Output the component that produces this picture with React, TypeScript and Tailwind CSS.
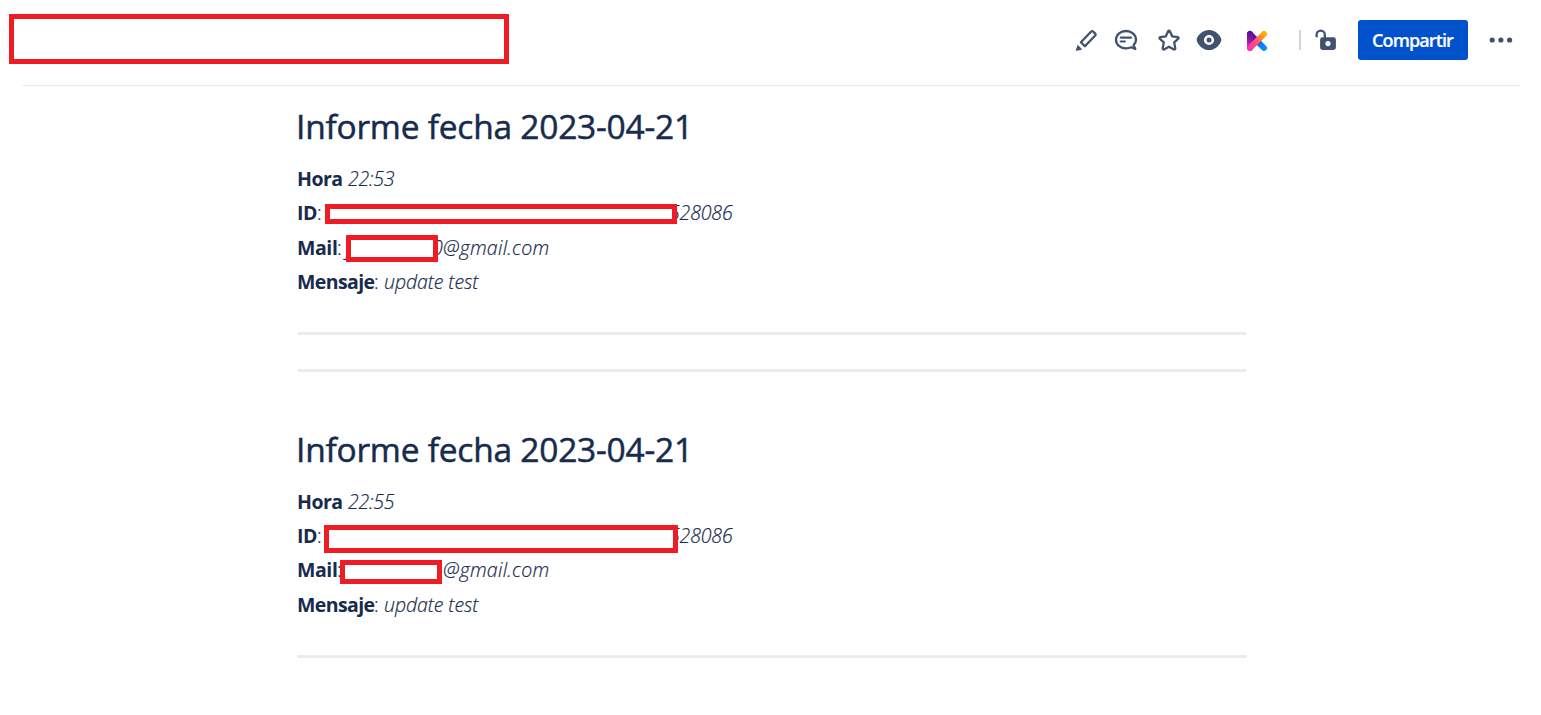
import React from "react";

const font = "font-['Open_Sans','Noto_Sans',sans-serif]";
const valueStyle = "font-light [-webkit-text-stroke:0.2px_currentColor]";

function Redaction({ className }: { className: string }) {
  return <div className={`absolute z-10 border-[5px] border-[#ee1c25] bg-white ${className}`} />;
}

function PageHeader() {
  return (
    <header className="mr-[20px] ml-[22px] flex h-[86px] items-start justify-end border-b border-[#ebebeb] pr-[7px] text-[#42526e]">
      <div className="mt-5 flex h-10 items-center">
        <svg className="mr-[16px] h-6 w-6" viewBox="0 0 24 24" fill="none" stroke="currentColor">
          <path d="M6.900 14.200 17.200 3.500a1.300 1.300 0 0 1 1.900 0l2.100 2.100a1.300 1.300 0 0 1 0 1.900L10.900 18.200Z" strokeWidth="2.300" strokeLinejoin="round" />
          <path d="m3.700 16.800 4.600 4.600-5.400 1.300c-.7.2-1.200-.3-1-1Z" fill="currentColor" stroke="none" />
        </svg>
        <svg className="mr-[19px] h-6 w-6" viewBox="0 0 24 24" fill="none" stroke="currentColor" strokeLinecap="round">
          <path d="M19.600 17.200 21.300 21l-4-1.700a13 13 0 0 1-5.300 1C6.200 20.300 2 16.600 2 11.700S6.200 3 12 3s10 3.800 10 8.700c0 2.100-.9 4.100-2.400 5.500Z" strokeWidth="2.300" strokeLinejoin="round" />
          <path d="M6.800 9.600h10.300M6.800 13.500h4" strokeWidth="2.200" />
        </svg>
        <svg className="mr-[15px] h-6 w-6" viewBox="0 0 24 24" fill="none" stroke="currentColor">
          <path d="M11.100 3.200a1 1 0 0 1 1.800 0l2.400 5.200 5.500.7a1 1 0 0 1 .5 1.600l-4.100 3.700 1.100 6a1 1 0 0 1-1.400 1L12 18.700l-4.900 2.700a1 1 0 0 1-1.400-1l1.100-6-4.100-3.700a1 1 0 0 1 .5-1.600l5.500-.7Z" strokeWidth="2.300" strokeLinejoin="round" />
        </svg>
        <svg className="mr-[24px] h-6 w-[26px]" viewBox="0 0 26 24">
          <path fill="currentColor" fillRule="evenodd" d="M13 2C7.200 2 3 6 1 10.100c-.5 1.100-.5 2.200 0 3.300C3 18 7.200 22 13 22s10-4 12-8.600c.5-1.100.5-2.200 0-3.300C23 6 18.800 2 13 2Zm0 4.900a5.100 5.100 0 1 1 0 10.200 5.100 5.100 0 0 1 0-10.200Z" />
          <circle cx="13" cy="12" r="2.500" fill="currentColor" />
        </svg>
        <svg className="mt-[2px] h-[22px] w-[22px]" viewBox="0 0 22 22">
          <defs>
            <linearGradient id="kBlue" x1="0" y1="0" x2="1" y2="1"><stop offset="0" stopColor="#4b0bb0" /><stop offset=".55" stopColor="#6a18a8" /><stop offset=".75" stopColor="#087cff" /><stop offset="1" stopColor="#0c8cff" /></linearGradient>
            <linearGradient id="kPink" x1="0" y1="0" x2="0" y2="1"><stop offset="0" stopColor="#4e0b9e" /><stop offset=".45" stopColor="#97179d" /><stop offset="1" stopColor="#ff35b0" /></linearGradient>
            <linearGradient id="kOrange" x1="0" y1="1" x2="1" y2="0"><stop offset="0" stopColor="#ff31b7" /><stop offset=".5" stopColor="#ff596d" /><stop offset="1" stopColor="#ffb000" /></linearGradient>
          </defs>
          <path d="M4 4 18 18" stroke="url(#kBlue)" strokeWidth="6" strokeLinecap="round" />
          <rect x="1" y="1" width="6" height="20" rx="3" fill="url(#kPink)" />
          <path d="M4 18 18 4" stroke="url(#kOrange)" strokeWidth="6" strokeLinecap="round" />
        </svg>
        <div className="mr-[14px] ml-[31px] h-5 w-[2px] bg-[#d0d4dc]" />
        <svg className="mr-[21px] h-6 w-[22px]" viewBox="0 0 22 24">
          <path d="M1.600 9.300V6.800a4.100 4.100 0 0 1 8.200 0V10" fill="none" stroke="currentColor" strokeWidth="2.300" />
          <path fill="currentColor" fillRule="evenodd" d="M7.500 9.300h11a2.400 2.400 0 0 1 2.400 2.400v7.900a2.400 2.400 0 0 1-2.400 2.400h-11a2.400 2.400 0 0 1-2.400-2.400v-7.900a2.400 2.400 0 0 1 2.400-2.400Zm5.500 3.700a2.600 2.600 0 1 0 0 5.200 2.600 2.600 0 0 0 0-5.200Z" />
        </svg>
        <button className="flex h-10 w-[110px] items-center justify-center rounded-[3px] bg-[#0052cc] pr-px text-[18px] font-semibold tracking-[-0.88px] text-white [-webkit-text-stroke:0.2px_currentColor]">Compartir</button>
        <svg className="ml-[20px] h-6 w-[26px]" viewBox="0 0 26 24" fill="currentColor">
          <circle cx="4.200" cy="12" r="2.600" /><circle cx="12.900" cy="12" r="2.600" /><circle cx="21.600" cy="12" r="2.600" />
        </svg>
      </div>
    </header>
  );
}

function Report({ time, second = false }: { time: string; second?: boolean }) {
  return (
    <section>
      <h1 className="-ml-px h-[48px] text-[33.500px] leading-[47px] font-medium tracking-[-0.230px] whitespace-nowrap [-webkit-text-stroke:0.500px_currentColor]">Informe fecha 2023-04-21</h1>
      <div className={`text-[19.500px] leading-[34.300px] whitespace-nowrap ${second ? "mt-[10.700px]" : "mt-[11px]"}`}>
        <p className="flex">
          <strong className="w-[51px] font-bold tracking-[-0.5px]">Hora</strong>
          <em className={`tracking-[-0.2px] ${valueStyle}`}>{time}</em>
        </p>
        <p className="relative flex">
          <strong className="w-[20px] font-bold tracking-[-0.4px]">ID</strong>
          <span className={`w-[352px] ${valueStyle}`}>:</span>
          <em className={`tracking-[-0.15px] ${valueStyle}`}>528086</em>
          <Redaction className={second ? "top-[6px] left-[27px] h-[28px] w-[354px]" : "top-[8px] left-[28px] h-[20px] w-[352px]"} />
        </p>
        <p className="relative flex">
          <strong className="w-[40px] font-bold tracking-[-0.4px]">Mail</strong>
          <span className={`w-[9px] ${valueStyle}`}>:</span>
          <em className={`w-[86px] ${valueStyle}`}>{second ? "" : "j"}</em>
          <em className={`w-[11px] ${valueStyle}`}>{second ? "" : "0"}</em>
          <em className={`tracking-[0.28px] ${valueStyle}`}>@gmail.com</em>
          <Redaction className={second ? "top-[7px] left-[43px] h-[24px] w-[102px]" : "top-[4px] left-[49px] h-[27px] w-[92px]"} />
        </p>
        <p className="flex">
          <strong className="w-[77px] font-bold tracking-[-0.6px]">Mensaje</strong>
          <span className={`w-[10px] ${valueStyle}`}>:</span>
          <em className={`tracking-[-0.1px] ${valueStyle}`}>update test</em>
        </p>
      </div>
    </section>
  );
}

export default function App() {
  return (
    <div className={`relative h-[715px] overflow-hidden bg-white text-[#172b4d] ${font}`}>
      <Redaction className="top-[14px] left-[9px] h-[50px] w-[500px]" />
      <PageHeader />
      <main className="ml-[297px] w-[950px] pt-[17px]">
        <Report time="22:53" />
        <hr className="mt-[32.800px] h-[3px] rounded-sm border-0 bg-[#ebecf0]" />
        <hr className="mt-[34px] h-[3px] rounded-sm border-0 bg-[#ebecf0]" />
        <div className="pt-[54px]">
          <Report time="22:55" second />
        </div>
        <hr className="mt-[33.300px] h-[3px] rounded-sm border-0 bg-[#ebecf0]" />
      </main>
    </div>
  );
}
